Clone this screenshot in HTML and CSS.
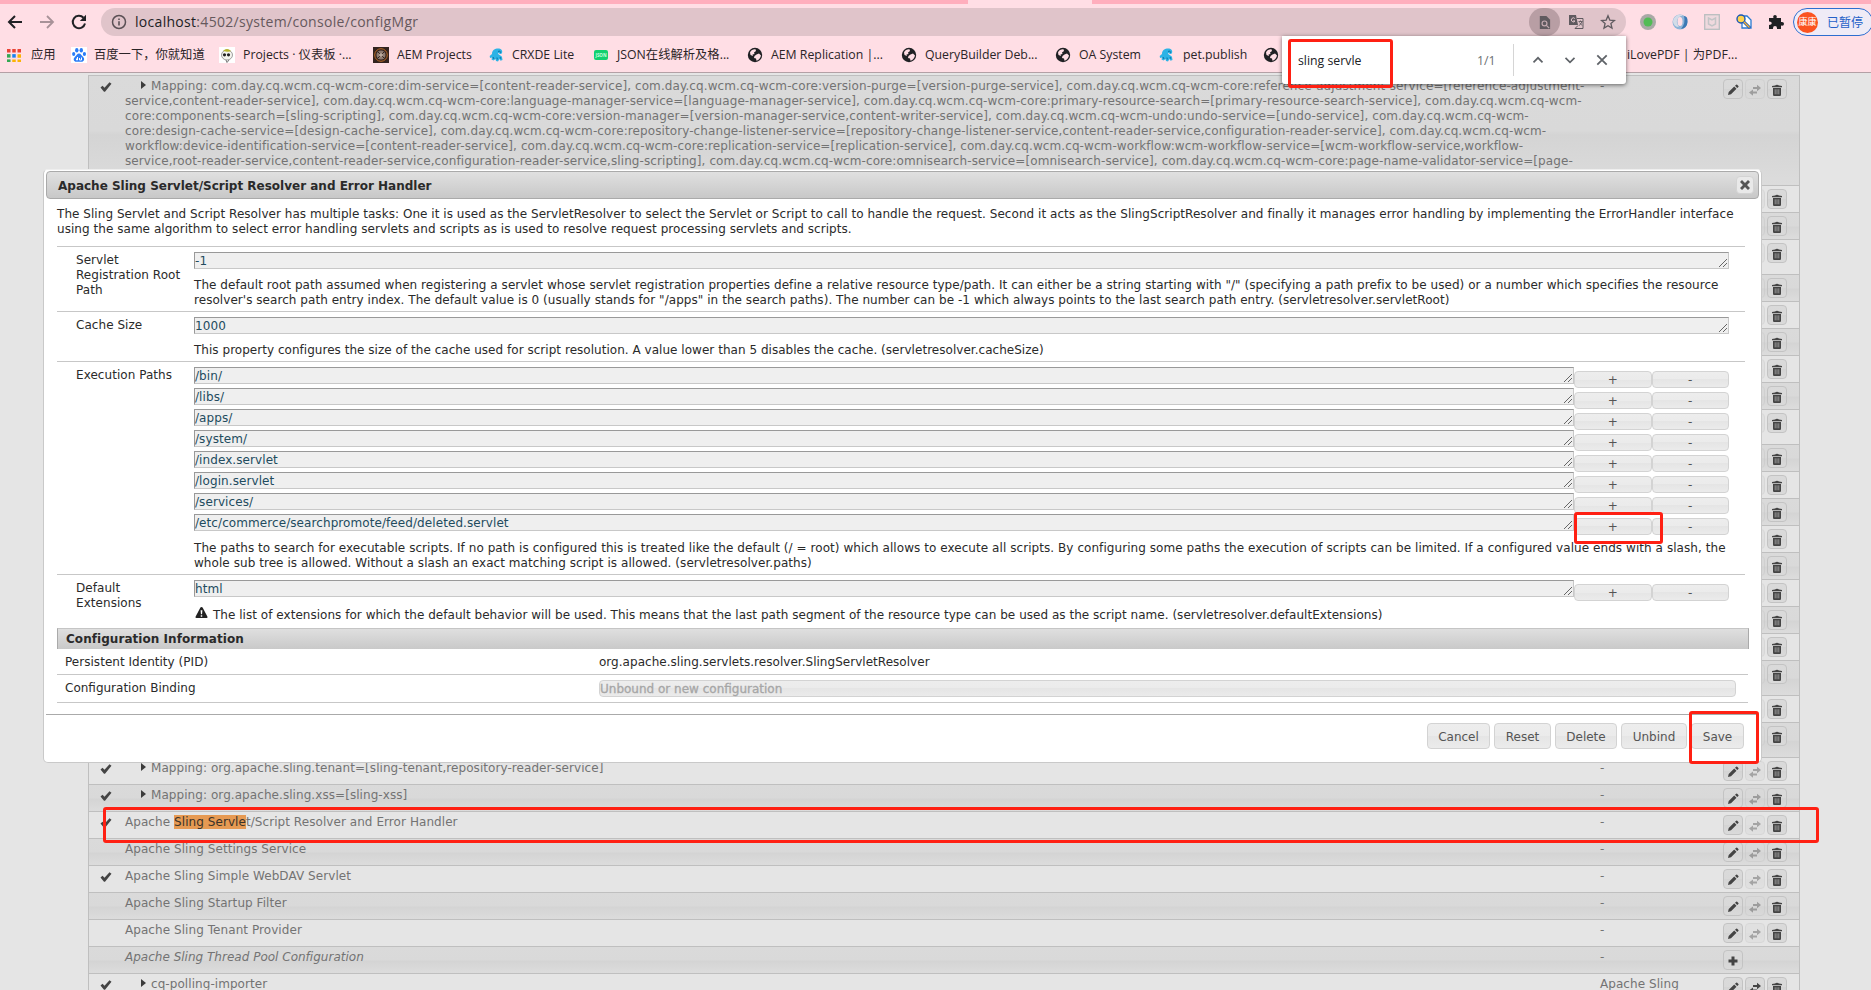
FILE: index.html
```
<!DOCTYPE html>
<html lang="zh">
<head>
<meta charset="utf-8">
<title>configMgr</title>
<link rel="stylesheet" href="styles.css">
</head>
<body>
<svg class="defs" width="0" height="0">
  <symbol id="globe" viewBox="0 0 16 16"><circle cx="8" cy="8" r="7.2" fill="#202124"/><path d="M3 5.5C4 3 6.500 2 8.500 2.300L9 4 7 5.500 7.500 7 5.500 7.500 6 9 3.500 8zM9.500 7.500L12 6.500 14 8.500C13.500 11 12 13 9.500 13.800L9 11.500 7 11 7.500 9z" fill="#ffdee5"/></symbol>
  <symbol id="crx" viewBox="0 0 16 16"><path d="M3 7C3 3 6 1.500 9 1.500c3 0 5 2 4 4.500-.6 1.300-2.500 1.500-3 .3L9 6c0 2 3 2 4 4l.5 3-2 .8-1-1.800-1.500 2.500-2-.5-.5-2-2 1.500-2-1L3 10.500 1 11l-.3-2z" fill="#2cb3e6"/><path d="M9 4.500c1.500-1 3 0 2.500 1.200M4 10l1 2M8 10.500l.3 2M11 10l.8 1.800" stroke="#0e6f9e" fill="none"/></symbol>
  <symbol id="pencil" viewBox="0 0 12 12"><path d="M1 11l.7-3L7.200 2.500l2.300 2.300L4 10.300zM8 1.800L9.200.7q.5-.4 1 0l1.200 1.200q.4.500 0 1L10.200 4z" fill="#444"/></symbol>
  <symbol id="swap" viewBox="0 0 12 12"><path d="M4 3H8V.8L12 4 8 7.200V5H4zM8 9.500H4v2.200L0 8.500 4 5.500v2h4z" fill="#444"/></symbol>
  <symbol id="trash" viewBox="0 0 12 12"><path d="M4 1.500Q6 0 8 1.500L11 2v1.200H1V2zM2 4h8v6.500Q10 12 9 12H3q-1 0-1-1.500z" fill="#444"/><path d="M4.200 5.300v5M6 5.300v5M7.800 5.300v5" stroke="#aaa" stroke-width=".8"/></symbol>
  <symbol id="plus" viewBox="0 0 12 12"><path d="M4.500 1.500h3v3h3v3h-3v3h-3v-3h-3v-3h3z" fill="#444"/></symbol>
  <symbol id="check" viewBox="0 0 12 12"><path d="M.5 6.500L2.500 4.800 4.500 6.800 9.500 1.200 11.500 2.800 5 10.800 4 10.800z" fill="#444"/></symbol>
</svg>

<header class="chrome">
  <div class="tabs"><span class="active-tab"></span></div>
  <div class="toolbar">
    <svg class="nav" viewBox="0 0 16 16"><path d="M15 8H2M8 2L2 8l6 6" fill="none" stroke="#202124" stroke-width="2"/></svg>
    <svg class="nav" viewBox="0 0 16 16"><path d="M1 8h13M8 2l6 6-6 6" fill="none" stroke="#a89298" stroke-width="1.8"/></svg>
    <svg class="nav" viewBox="0 0 16 16"><path d="M14 9.500A6.200 6.200 0 1 1 12.500 3.800" fill="none" stroke="#202124" stroke-width="2"/><path d="M15 .8V7H8.800z" fill="#202124"/></svg>
    <div class="omnibox">
      <svg class="info" viewBox="0 0 16 16"><circle cx="8" cy="8" r="6.500" fill="none" stroke="#5a5055" stroke-width="1.500"/><path d="M8 7.200v4.300M8 4.400v1.700" stroke="#5a5055" stroke-width="1.600"/></svg>
      <span class="url"><b>localhost</b>:4502/system/console/configMgr</span>
      <span class="zoomed"><svg viewBox="0 0 16 16"><path d="M3 1h7l4 4v10H3z" fill="#5f5a5f"/><circle cx="8" cy="9" r="2.600" fill="none" stroke="#c3aab0" stroke-width="1.300"/><path d="M10 11l3 3" stroke="#c3aab0" stroke-width="1.300"/></svg></span>
      <svg class="tool" viewBox="0 0 16 16"><path d="M1 1h7l2 10H1z" fill="#5f5a5f"/><path d="M9 4.500h6v10H7l3-3" fill="none" stroke="#5f5a5f"/><path d="M6.800 4.500a2 2 0 1 0 .2 2.500H5" fill="none" stroke="#e0c4ca"/><path d="M10.500 7.500h4M12.500 6.500v1M14 7.500q-1 3-3 4M11.500 8.500l2.500 3" fill="none" stroke="#5f5a5f" stroke-width=".9"/></svg>
      <svg class="tool" viewBox="0 0 16 16"><path d="M8 1.800l1.800 4.300 4.700.4-3.600 3 1.100 4.600L8 11.700l-4 2.400 1.100-4.600-3.600-3 4.700-.4z" fill="none" stroke="#5f5a5f" stroke-width="1.300"/></svg>
    </div>
    <div class="exts">
      <svg viewBox="0 0 16 16"><circle cx="8" cy="8" r="8" fill="#a9a9a6"/><circle cx="8" cy="8" r="4.500" fill="#52bc55"/></svg>
      <svg viewBox="0 0 16 16"><circle cx="8" cy="8" r="7.500" fill="#8eb4d8"/><path d="M1 8A7 7 0 0 1 11 1.500Q4 3 5 9q1 3 2 4Q2 13 1 8z" fill="#d3dce8"/><path d="M9 15q6-1 6.500-7T12 2q2 7-3 13z" fill="#3c78b4"/><ellipse cx="8" cy="7.500" rx="2.500" ry="4.500" fill="#ffdee5"/></svg>
      <svg viewBox="0 0 16 16"><rect x=".7" y=".7" width="14.600" height="14.600" fill="#efd9de" stroke="#b9bec0" stroke-width="1.300"/><path d="M4.500 4v6L8 12l3.500-2V4L8 6z" fill="none" stroke="#c3c5c7" stroke-width="1.500"/></svg>
      <svg viewBox="0 0 16 16"><path d="M6 2h5l4 4v8H6z" fill="#fff" stroke="#2a7ad0" stroke-width="1.300"/><circle cx="5" cy="5" r="4" fill="#ffd34d" stroke="#1a57b8" stroke-width="1.400"/><path d="M8 8l6 6" stroke="#1a57b8" stroke-width="3"/><path d="M8 8l5.500 5.500" stroke="#ffb52e" stroke-width="1.200"/></svg>
      <svg viewBox="0 0 16 16"><path d="M1 4h4.500Q4.500 1 7 1t1.500 3H13v4q3-.6 3 1.800T13 11.500V15H9q.3-3-2-3t-2 3H1v-4q2.800 0 2.800-1.800T1 7.500z" fill="#202124"/></svg>
    </div>
    <div class="profile"><span class="avatar">康康</span><span>已暂停</span></div>
  </div>
  <nav class="bookmarks">
    <a><svg viewBox="0 0 16 16"><path d="M0 1h4v4H0zM6 1h4v4H6zM12 1h4v4h-4z" fill="#ea4335"/><path d="M0 7h4v4H0z" fill="#34a853"/><path d="M6 7h4v4H6z" fill="#1a82f0"/><path d="M12 7h4v4h-4zM6 13h4v3H6zM12 13h4v3h-4z" fill="#fbb304"/><path d="M0 13h4v3H0z" fill="#34a853"/></svg>应用</a>
    <a><svg viewBox="0 0 16 16"><path d="M0 0h16v16H0z" fill="#fff"/><g fill="#2a7cf7"><ellipse cx="5.800" cy="3.300" rx="1.700" ry="2.200"/><ellipse cx="10.300" cy="3.300" rx="1.700" ry="2.200"/><ellipse cx="2.700" cy="7" rx="1.600" ry="2.100"/><ellipse cx="13.400" cy="7" rx="1.600" ry="2.100"/><path d="M8 6.500c2 0 2.500 2 4 3.300 2.500 2.400.5 5.200-1.500 5h-5c-2.500.2-4-2.600-1.500-5C5.500 8.500 6 6.500 8 6.500z"/></g><path d="M6.500 10v3H5.500v-1.500M8.500 11v2h2v-2.500" fill="none" stroke="#fff"/></svg>百度一下，你就知道</a>
    <a><svg viewBox="0 0 16 16"><path d="M0 0h16v16H0z" fill="#fff"/><ellipse cx="8" cy="8" rx="5.500" ry="5" fill="#f4f4ee" stroke="#777" stroke-width=".7"/><path d="M4 4q4-4 8 0-1 1-4 .8z" fill="#b7b52c"/><circle cx="5.500" cy="7.800" r="1.600" fill="#222"/><circle cx="9.500" cy="7.800" r="1.600" fill="#222"/><path d="M7 13l1 2.500L10 13" fill="none" stroke="#777"/></svg>Projects · 仪表板 ·...</a>
    <a><svg viewBox="0 0 16 16"><path d="M0 0h16v16H0z" fill="#33231f"/><circle cx="8" cy="8" r="6.300" fill="none" stroke="#b96a25"/><circle cx="8" cy="8" r="4.500" fill="#8b7a70"/><path d="M5 5l6 6M11 5l-6 6" stroke="#33231f"/><circle cx="8" cy="8" r="1.800" fill="#b9a99c"/></svg>AEM Projects</a>
    <a><svg><use href="#crx"/></svg>CRXDE Lite</a>
    <a><svg viewBox="0 0 16 16"><rect x="1" y="3" width="14" height="10" rx="2" fill="#12d070"/><text x="8" y="9.700" class="json" text-anchor="middle">JSON</text></svg>JSON在线解析及格...</a>
    <a><svg><use href="#globe"/></svg>AEM Replication |...</a>
    <a><svg><use href="#globe"/></svg>QueryBuilder Deb...</a>
    <a><svg><use href="#globe"/></svg>OA System</a>
    <a><svg><use href="#crx"/></svg>pet.publish</a>
    <a><svg><use href="#globe"/></svg></a>
    <a>iLovePDF | 为PDF...</a>
  </nav>
</header>

<main class="page">
  <div class="config-table" id="rows"></div>
</main>

<section class="dialog">
  <div class="dialog-title"><span>Apache Sling Servlet/Script Resolver and Error Handler</span>
    <span class="close"><svg viewBox="0 0 12 12"><path d="M1 3l2-2 3 3 3-3 2 2-3 3 3 3-2 2-3-3-3 3-2-2 3-3z" fill="#555"/></svg></span></div>
  <div class="dialog-body">
    <p class="intro">The Sling Servlet and Script Resolver has multiple tasks: One it is used as the ServletResolver to select the Servlet or Script to call to handle the request. Second it acts as the SlingScriptResolver and finally it manages error handling by implementing the ErrorHandler interface<br>using the same algorithm to select error handling servlets and scripts as is used to resolve request processing servlets and scripts.</p>
    <div class="prop servlet-root"><div class="label">Servlet<br>Registration Root<br>Path</div><div class="field">
      <div class="line"><span class="area">-1</span></div>
      <p>The default root path assumed when registering a servlet whose servlet registration properties define a relative resource type/path. It can either be a string starting with "/" (specifying a path prefix to be used) or a number which specifies the resource<br>resolver's search path entry index. The default value is 0 (usually stands for "/apps" in the search paths). The number can be -1 which always points to the last search path entry. (servletresolver.servletRoot)</p></div></div>
    <div class="prop cache"><div class="label">Cache Size</div><div class="field">
      <div class="line"><span class="area">1000</span></div>
      <p>This property configures the size of the cache used for script resolution. A value lower than 5 disables the cache. (servletresolver.cacheSize)</p></div></div>
    <div class="prop paths"><div class="label">Execution Paths</div><div class="field">
      <div class="line"><span class="area">/bin/</span><i class="btn">+</i><i class="btn">-</i></div>
      <div class="line"><span class="area">/libs/</span><i class="btn">+</i><i class="btn">-</i></div>
      <div class="line"><span class="area">/apps/</span><i class="btn">+</i><i class="btn">-</i></div>
      <div class="line"><span class="area">/system/</span><i class="btn">+</i><i class="btn">-</i></div>
      <div class="line"><span class="area">/index.servlet</span><i class="btn">+</i><i class="btn">-</i></div>
      <div class="line"><span class="area">/login.servlet</span><i class="btn">+</i><i class="btn">-</i></div>
      <div class="line"><span class="area">/services/</span><i class="btn">+</i><i class="btn">-</i></div>
      <div class="line"><span class="area">/etc/commerce/searchpromote/feed/deleted.servlet</span><i class="btn">+</i><i class="btn">-</i></div>
      <p>The paths to search for executable scripts. If no path is configured this is treated like the default (/ = root) which allows to execute all scripts. By configuring some paths the execution of scripts can be limited. If a configured value ends with a slash, the<br>whole sub tree is allowed. Without a slash an exact matching script is allowed. (servletresolver.paths)</p></div></div>
    <div class="prop extensions"><div class="label">Default<br>Extensions</div><div class="field">
      <div class="line"><span class="area">html</span><i class="btn">+</i><i class="btn">-</i></div>
      <p><svg class="warn" viewBox="0 0 14 12"><path d="M7 0Q8 0 8.500 1L13.500 10.500Q14 12 12.500 12h-11Q0 12 .5 10.500L5.500 1Q6 0 7 0z" fill="#222"/><path d="M6 3.500h2L7.600 8H6.400zM6.200 9h1.600v1.500H6.200z" fill="#fff"/></svg>The list of extensions for which the default behavior will be used. This means that the last path segment of the resource type can be used as the script name. (servletresolver.defaultExtensions)</p></div></div>
    <h2 class="info-head">Configuration Information</h2>
    <div class="info-row pid"><span>Persistent Identity (PID)</span><span>org.apache.sling.servlets.resolver.SlingServletResolver</span></div>
    <div class="info-row binding"><span>Configuration Binding</span><span class="unbound">Unbound or new configuration</span></div>
  </div>
  <footer class="dialog-foot"><button class="cancel">Cancel</button><button class="reset">Reset</button><button class="delete">Delete</button><button class="unbind">Unbind</button><button class="save">Save</button></footer>
</section>

<div class="findbar"><span class="query">sling servle</span><span class="count">1/1</span><span class="rule"></span>
  <svg viewBox="0 0 16 16"><path d="M3.500 10.300L8 5.800l4.500 4.500" fill="none" stroke="#5f6368" stroke-width="1.700"/></svg>
  <svg viewBox="0 0 16 16"><path d="M3.500 5.800L8 10.300l4.500-4.500" fill="none" stroke="#5f6368" stroke-width="1.700"/></svg>
  <svg viewBox="0 0 16 16"><path d="M3.300 3.300l9.400 9.400M12.700 3.300l-9.400 9.400" fill="none" stroke="#5f6368" stroke-width="1.800"/></svg></div>

<div class="mark mark-search"></div>
<div class="mark mark-plus"></div>
<div class="mark mark-save"></div>
<div class="mark mark-row"></div>
<script src="rows.js"></script>
</body>
</html>
```
FILE: styles.css
```
* { box-sizing: border-box; }
body { margin: 0; width: 1871px; height: 990px; overflow: hidden; position: relative; background: #e5e5e5; font: 12px/15px "DejaVu Sans", sans-serif; letter-spacing: .05px; color: #2a2a2a; }
p, h2 { margin: 0; }
svg { display: block; }
.defs { position: absolute; }

.chrome { height: 73px; background: #ffdee5; border-bottom: 1px solid #b3a0a5; font-family: "Open Sans", "Noto Sans CJK SC", sans-serif; color: #2b2427; letter-spacing: 0; }
.tabs { height: 4px; background: #ffaebd; padding-left: 968px; }
.active-tab { display: block; width: 124px; height: 4px; background: #ffdee5; }
.toolbar { height: 36px; display: flex; align-items: center; padding-left: 7px; }
.nav { width: 16px; height: 16px; margin-right: 16px; flex: none; }
.omnibox { width: 1525px; flex: none; height: 28px; margin-left: -2px; border-radius: 14px; background: #e0c4ca; display: flex; align-items: center; padding-left: 10px; }
.info { width: 16px; height: 16px; }
.url { margin-left: 8px; flex: 1; font: 14px/20px "Open Sans", sans-serif; letter-spacing: .3px; color: #66595d; }
.url b { font-weight: 400; color: #202124; }
.zoomed { width: 31px; height: 28px; border-radius: 14px; background: #b89ea4; display: flex; align-items: center; justify-content: center; margin-right: 8px; }
.zoomed svg { width: 15px; height: 15px; }
.tool { width: 16px; height: 16px; margin-right: 16px; }
.tool:last-child { margin-right: 10px; }
.exts { display: flex; flex: none; gap: 16px; margin-left: 14px; }
.exts svg { width: 16px; height: 16px; }
.profile { display: flex; align-items: center; gap: 9px; margin-left: 9px; width: 80px; height: 28px; flex: none; border: 1px solid #2d6ed0; border-radius: 14px; background: #efebf6; padding-left: 3px; color: #2460c8; font-size: 12px; white-space: nowrap; }
.avatar { width: 21px; height: 21px; border-radius: 50%; background: #fb5320; color: #fff; font-size: 9px; line-height: 20px; text-align: center; }
.bookmarks { height: 30px; display: grid; align-items: center; padding-left: 7px; grid-template-columns: 64px 146px 154px 118px 104px 154px 154px 154px 104px 104px 364px 200px; }
.bookmarks a { display: flex; gap: 8px; align-items: center; white-space: nowrap; font-size: 12.3px; line-height: 18px; }
.bookmarks svg { width: 16px; height: 16px; flex: none; }
.bookmarks a:first-child svg { width: 14px; height: 14px; }
.bookmarks a:first-child { gap: 10px; }
.bookmarks a:nth-child(3) { padding-left: 2px; }
.bookmarks a:nth-child(4) { padding-left: 2px; }
.bookmarks a:nth-child(2), .bookmarks a:nth-child(5) { gap: 7px; }
.json { font: bold 4.500px "Open Sans", sans-serif; fill: #c8ffdf; }

.page { padding: 2px 71px 0 88px; }
.config-table { border: solid #bfbfbf; border-width: 0 1px; height: 920px; overflow: hidden; color: #737373; letter-spacing: .065px; }
.row { display: grid; grid-template-columns: 36px 1475px 123px 1fr; border-top: 1px solid #bfbfbf; height: 27px; padding-top: 3px; background: #e5e5e5; white-space: nowrap; overflow: hidden; }
.row.odd { background: linear-gradient(#dadada, #d9d9d9 50%, #d4d4d4 54%, #dcdcdc); }
.row.tall { height: 35px; }
.row.first { height: 110px; letter-spacing: .093px; }
.row.italic .name { font-style: italic; letter-spacing: .01px; }
.tick { width: 12px; height: 12px; margin: 2px 0 0 11px; }
.mapping::before { content: ""; display: inline-block; border: solid transparent; border-width: 4px 0 4px 5px; border-left-color: #3c3c3c; margin: 0 5px 4px 16px; vertical-align: middle; }
.row mark { background: #e69a53; color: #3b3329; }
.actions { display: flex; gap: 2px; }
.actions span { width: 20px; height: 20px; border: 1px solid #c3c3c3; border-radius: 4px; background: linear-gradient(#dadada, #d9d9d9 50%, #d4d4d4 50%, #dadada); padding: 4px 3px; }
.actions .off { opacity: .4; }
.actions svg { width: 12px; height: 12px; }
.actions svg use { width: 12px; height: 12px; }

.dialog { position: absolute; left: 43px; top: 169px; width: 1719px; height: 594px; background: #fff; border: 1px solid #c9c9c9; border-top-color: #eee; border-radius: 5px; padding: 1px 2px; }
.dialog-title { height: 28px; border: 1px solid #aaa; border-radius: 4px; background: linear-gradient(#e0e0e0, #c8c8c8); display: flex; align-items: center; justify-content: space-between; padding: 0 4px 0 11px; font-weight: bold; letter-spacing: 0; }
.dialog-title > span:first-child { padding-top: 2px; }
.close { width: 18px; height: 18px; border: 1px solid #d3d3d3; border-radius: 4px; background: #e9e9e9; padding: 2px; }
.close svg { width: 12px; height: 12px; }
.dialog-body { padding: 8px 9px 0 11px; white-space: nowrap; height: 515px; }
.intro { height: 39px; letter-spacing: .045px; }
.prop { width: 1688px; border-top: 1px solid #c7c7c7; display: grid; grid-template-columns: 118px 1535px; padding: 5px 0 0 19px; }
.label { padding-top: 1px; }
.servlet-root { height: 65px; }
.servlet-root p { letter-spacing: .05px; }
.paths p { letter-spacing: .06px; }
.cache { height: 50px; }
.cache p, .extensions p { letter-spacing: .03px; }
.paths { height: 213px; }
.extensions { height: 51px; }
.line { display: flex; height: 17px; margin-bottom: 4px; }
.area { flex: 1; height: 17px; border: 1px solid #c8c8c8; border-top-color: #999; border-left-color: #999; background: #efefef; line-height: 16px; color: #224b5e; letter-spacing: .08px; display: flex; justify-content: space-between; }
.area::after { content: ""; width: 8px; height: 8px; margin: 6px 1px 0 0; background: linear-gradient(135deg, transparent 46%, #666 46% 54%, transparent 54% 71%, #666 71% 79%, transparent 79%); }
.btn { width: 77.500px; height: 17px; margin-top: 4px; border: 1px solid #d3d3d3; border-radius: 4px; background: linear-gradient(#ededed, #ebebeb 50%, #e5e5e5 50%, #ebebeb); text-align: center; font-style: normal; line-height: 17px; color: #555; flex: none; }
.field p { margin-top: 10px; }
.servlet-root .field p, .cache .field p { margin-top: 9px; }
.warn { display: inline-block; width: 13px; height: 11px; margin: 0 5px 0 1px; vertical-align: 1px; }
.info-head { width: 1692px; margin-top: 3px; height: 21px; border: 1px solid #aaa; border-top-color: #c5c5c5; border-bottom: 0; background: linear-gradient(#dfdfdf, #c9c9c9); padding-left: 8px; font-size: 12px; line-height: 20px; letter-spacing: .05px; }
.info-row { width: 1691px; display: grid; grid-template-columns: 534px 1137px; border-bottom: 1px solid #c7c7c7; }
.pid { height: 26px; padding: 6px 0 0 8px; letter-spacing: .03px; }
.binding { height: 28px; padding: 5px 0 0 8px; letter-spacing: 0; }
.binding > span:first-child { padding-top: 1px; }
.unbound { height: 17px; border: 1px solid #d3d3d3; border-radius: 4px; background: linear-gradient(#ededed, #ebebeb 50%, #e5e5e5 50%, #ebebeb); color: #a6a6a6; line-height: 16px; -webkit-text-stroke: .3px #a6a6a6; }
.dialog-foot { border-top: 1px solid #aaa; display: flex; justify-content: flex-end; gap: 4px; padding: 8px 15px 0 0; }
.dialog-foot button { height: 26px; padding: 2px 0 0; border: 1px solid #d3d3d3; border-radius: 4px; background: linear-gradient(#ededed, #ebebeb 50%, #e5e5e5 50%, #ebebeb); font: 12px/15px "DejaVu Sans", sans-serif; color: #555; }
.cancel { width: 63px; }
.reset { width: 57px; }
.delete { width: 62px; }
.unbind { width: 66px; }
.save { width: 53px; }

.findbar { position: absolute; left: 1282px; top: 36px; width: 344px; height: 48px; background: #fff; border-radius: 0 0 3px 3px; box-shadow: 0 1px 4px rgba(0, 0, 0, .55); display: flex; align-items: center; font: 12.3px/18px "Open Sans", sans-serif; color: #202124; letter-spacing: 0; }
.query { width: 179px; padding: 1px 0 0 16px; }
.count { width: 52px; padding: 1px 0 0 16px; color: #6b6f73; }
.rule { width: 1px; height: 32px; background: #d5d5d5; margin-right: 16px; }
.findbar svg { width: 16px; height: 16px; margin-right: 16px; }

.mark { position: absolute; border: 3px solid #ff2013; border-radius: 3px; }
.mark-search { left: 1288px; top: 39px; width: 105px; height: 49px; }
.mark-plus { left: 1574px; top: 512px; width: 89px; height: 32px; }
.mark-save { left: 1689px; top: 711px; width: 70px; height: 53px; }
.mark-row { left: 103px; top: 807px; width: 1716px; height: 36px; }
```
FILE: rows.js
```
const firstMapping = [
  'Mapping: com.day.cq.wcm.cq-wcm-core:dim-service=[content-reader-service], com.day.cq.wcm.cq-wcm-core:version-purge=[version-purge-service], com.day.cq.wcm.cq-wcm-core:reference-adjustment-service=[reference-adjustment-',
  'service,content-reader-service], com.day.cq.wcm.cq-wcm-core:language-manager-service=[language-manager-service], com.day.cq.wcm.cq-wcm-core:primary-resource-search=[primary-resource-search-service], com.day.cq.wcm.cq-wcm-',
  'core:components-search=[sling-scripting], com.day.cq.wcm.cq-wcm-core:version-manager=[version-manager-service,content-writer-service], com.day.cq.wcm.cq-wcm-undo:undo-service=[undo-service], com.day.cq.wcm.cq-wcm-',
  'core:design-cache-service=[design-cache-service], com.day.cq.wcm.cq-wcm-core:repository-change-listener-service=[repository-change-listener-service,content-reader-service,configuration-reader-service], com.day.cq.wcm.cq-wcm-',
  'workflow:device-identification-service=[content-reader-service], com.day.cq.wcm.cq-wcm-core:replication-service=[replication-service], com.day.cq.wcm.cq-wcm-workflow:wcm-workflow-service=[wcm-workflow-service,workflow-',
  'service,root-reader-service,content-reader-service,configuration-reader-service,sling-scripting], com.day.cq.wcm.cq-wcm-core:omnisearch-service=[omnisearch-service], com.day.cq.wcm.cq-wcm-core:page-name-validator-service=[page-'
].join('<br>');

// kind flags: c = configured, m = mapping entry, t = two-line height, f = first row, i = factory, b = bound
const rows = [{ name: firstMapping, kind: 'cmf' }];
for (const kind of ['', '', 't', '', '', '', '', '', 't', '', '', '', '', '', '', '', '', 't', '', 't']) {
  rows.push({ name: '', kind });
}
rows.push(
  { name: 'Mapping: org.apache.sling.tenant=[sling-tenant,repository-reader-service]', kind: 'cm' },
  { name: 'Mapping: org.apache.sling.xss=[sling-xss]', kind: 'cm' },
  { name: 'Apache <mark>Sling Servle</mark>t/Script Resolver and Error Handler', kind: 'c' },
  { name: 'Apache Sling Settings Service', kind: '' },
  { name: 'Apache Sling Simple WebDAV Servlet', kind: 'c' },
  { name: 'Apache Sling Startup Filter', kind: '' },
  { name: 'Apache Sling Tenant Provider', kind: '' },
  { name: 'Apache Sling Thread Pool Configuration', kind: 'i' },
  { name: 'cq-polling-importer', kind: 'cmb', bundle: 'Apache Sling' }
);

const icon = (id, cls = '') => `<span class="${cls}"><svg><use href="#${id}"/></svg></span>`;
let dark = false;
document.getElementById('rows').innerHTML = rows.map(({ name, kind, bundle = '-' }) => {
  dark = !dark;
  const has = flag => kind.includes(flag);
  const cls = ['row', dark ? 'odd' : '', has('t') ? 'tall' : '', has('f') ? 'first' : '', has('i') ? 'italic' : ''].join(' ');
  const actions = has('i') ? icon('plus') : icon('pencil') + icon('swap', has('b') ? '' : 'off') + icon('trash');
  return `<div class="${cls}"><div>${has('c') ? '<svg class="tick"><use href="#check"/></svg>' : ''}</div>` +
    `<div class="name${has('m') ? ' mapping' : ''}">${name}</div><div>${name ? bundle : ''}</div><div class="actions">${actions}</div></div>`;
}).join('');
```
